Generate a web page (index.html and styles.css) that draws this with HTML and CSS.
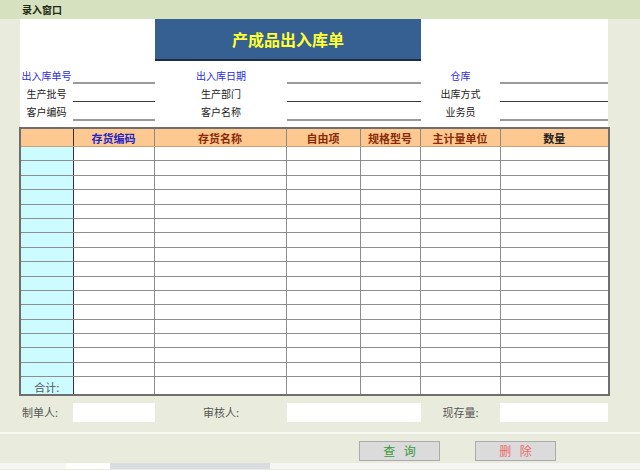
FILE: index.html
```html
<!DOCTYPE html>
<html lang="zh-CN">
<head>
    <meta charset="UTF-8">
    <title>录入窗口</title>
    <link rel="stylesheet" href="styles.css">
</head>
<body>
    <div class="topbar">录入窗口</div>

    <div class="head">
      <div class="title">产成品出入库单</div>

      <div class="fields">
        <span class="lbl blue">出入库单号</span><span class="line l1"></span>
        <span class="lbl blue">出入库日期</span><span class="line l1 wide"></span>
        <span class="lbl blue">仓库</span><span class="line l1"></span>

        <span class="lbl">生产批号</span><span class="line l2"></span>
        <span class="lbl">生产部门</span><span class="line l2 wide"></span>
        <span class="lbl">出库方式</span><span class="line l2"></span>

        <span class="lbl">客户编码</span><span class="line l3"></span>
        <span class="lbl">客户名称</span><span class="line l3 wide"></span>
        <span class="lbl">业务员</span><span class="line l3"></span>
      </div>
    </div>

    <table class="grid">
      <colgroup>
        <col class="w1"><col class="w2"><col class="w3">
        <col class="w4"><col class="w5"><col class="w6"><col>
      </colgroup>
      <thead>
        <tr>
          <th class="idx"></th>
          <th class="c-blue">存货编码</th>
          <th>存货名称</th>
          <th>自由项</th>
          <th>规格型号</th>
          <th>主计量单位</th>
          <th class="c-black">数量</th>
        </tr>
      </thead>
      <tbody id="rows"></tbody>
      <tfoot>
        <tr class="sum">
          <td class="idx">合计:</td><td></td><td></td><td></td><td></td><td></td><td></td>
        </tr>
      </tfoot>
    </table>

    <div class="sign">
      <span class="slbl left">制单人:</span><span class="box"></span>
      <span class="slbl">审核人:</span><span class="box wide"></span>
      <span class="slbl">现存量:</span><span class="box"></span>
    </div>

    <div class="btnbar">
      <button class="btn query">查 询</button>
      <button class="btn del">删 除</button>
    </div>

    <div class="tabs">
      <span class="t0"></span><span class="t1"></span><span class="t2"></span>
    </div>

    <script>
    // 16 空白明细行
    const tbody = document.getElementById('rows')
    for (let i = 0; i < 16; i++) {
      const tr = document.createElement('tr')
      tr.innerHTML = '<td class="idx"></td>' + '<td></td>'.repeat(6)
      tbody.appendChild(tr)
    }
    </script>
</body>
</html>
```

FILE: styles.css
```css
body{
    margin: 0;
    width: 640px;
    height: 470px;
    overflow: hidden;
    background-color: #e9ecdc;
    font-family: "Noto Sans CJK SC", "Liberation Sans", sans-serif;
    font-size: 10px;
    color: #222;
}
.topbar{
    height: 19px;
    line-height: 19px;
    background-color: #d6e2bf;
    padding-left: 22px;
    font-weight: bold;
    font-size: 10px;
    color: #1e2a10;
}

/* 表头区域 */
.head{
    margin-left: 20px;
    width: 588px;
    height: 108px;
    background-color: #fff;
}
.title{
    margin-left: 135px;
    width: 266px;
    height: 40px;
    line-height: 40px;
    background-color: #365f92;
    border-bottom: 2px solid #1c2c45;
    color: #ffff33;
    font-size: 16px;
    font-weight: bold;
    text-align: center;
}
.fields{
    display: grid;
    grid-template-columns: 53px 82px 132px 134px 79px 108px;
    grid-auto-rows: 18px;
    margin-top: 6px;
}
.lbl{
    text-align: center;
    line-height: 18px;
    color: #222;
}
.lbl.blue{
    color: #2b2bd9;
}
.line{
    display: block;
    height: 18px;
    box-sizing: border-box;
}
.l1{ border-bottom: 2px solid #9a9a9a; height: 17px; }
.l2{ border-bottom: 1px solid #3a3a3a; height: 17px; }
.l3{ border-bottom: 2px solid #9a9a9a; height: 18px; }

/* 明细表 */
.grid{
    margin-left: 19px;
    width: 591px;
    table-layout: fixed;
    border-collapse: collapse;
    border: 2px solid #6e6e6e;
    background-color: #fff;
}
.grid .w1{ width: 53px; }
.grid .w2{ width: 81px; }
.grid .w3{ width: 132px; }
.grid .w4{ width: 74px; }
.grid .w5{ width: 60px; }
.grid .w6{ width: 80px; }
.grid th{
    height: 17px;
    padding: 0;
    background-color: #fdc990;
    color: #8a2a08;
    font-size: 11px;
    font-weight: bold;
    border: 1px solid #8a8a8a;
    border-bottom: 1px solid #c8a27a;
}
.grid th.c-blue{ color: #2424c8; }
.grid th.c-black{ color: #222; }
.grid td{
    height: 13.4px;
    padding: 0;
    border: 1px solid #8e8e8e;
    border-top-color: #b0b0b0;
}
.grid .idx{
    background-color: #ccfcff;
    border-right: 1px solid #333;
}
.grid th.idx{
    background-color: #fdc990;
}
.grid .sum td{
    height: 17px;
    vertical-align: bottom;
}
.grid .sum td.idx{
    text-align: center;
    color: #555;
    font-size: 11px;
    line-height: 14px;
}

/* 签字栏 */
.sign{
    display: grid;
    grid-template-columns: 53px 82px 132px 134px 79px 108px;
    margin: 7px 0 0 20px;
    height: 19px;
}
.slbl{
    text-align: center;
    line-height: 19px;
    font-size: 11px;
    color: #555;
}
.slbl.left{
    text-align: left;
    padding-left: 2px;
}
.box{
    background-color: #fff;
}

.btnbar{
    margin-top: 10px;
    border-top: 2px solid #f7f8f1;
    height: 31px;
    display: flex;
    align-items: flex-start;
    padding-top: 7px;
    box-sizing: border-box;
}
.btn{
    width: 81px;
    height: 20px;
    padding: 0;
    background-color: #dbdbdb;
    border: 1px solid #ababab;
    font-family: "Noto Sans CJK SC", sans-serif;
    font-size: 12px;
    line-height: 16px;
    word-spacing: 6px;
}
.btn.query{
    margin-left: 359px;
    color: #3a9a3a;
}
.btn.del{
    margin-left: 35px;
    color: #ec6a6a;
}

.tabs{
    display: flex;
    height: 6px;
    background-color: #f5f5f2;
}
.tabs .t0{ width: 66px; }
.tabs .t1{ width: 44px; background-color: #fff; }
.tabs .t2{ width: 160px; background-color: #d9dce0; }
```
